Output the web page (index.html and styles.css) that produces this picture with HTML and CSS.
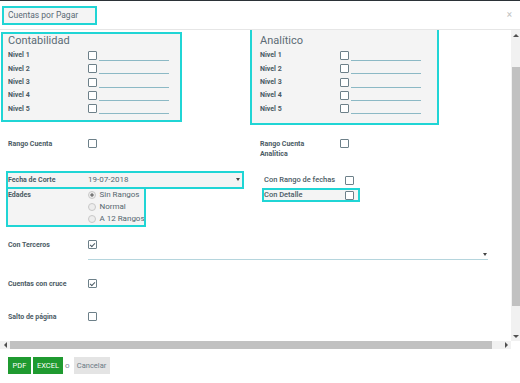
FILE: index.html
```html
<!DOCTYPE html>
<html lang="es">
<head>
  <meta charset="UTF-8" />
  <title>Cuentas por Pagar</title>
  <link rel="stylesheet" href="styles.css">
</head>
<body>
  <div class="modal">
    <div class="modal-header">
      <div class="modal-title hl">Cuentas por Pagar</div>
      <span class="cerrar">×</span>
    </div>

    <div class="modal-body">
      <div class="viewport">
        <div class="form">

          <div class="grid niveles">
            <div class="nivel-box hl box-izq">
              <h3>Contabilidad</h3>
              <div class="nivel-row"><span class="lbl">Nivel 1</span><span class="chk"></span><span class="linea"></span></div>
              <div class="nivel-row"><span class="lbl">Nivel 2</span><span class="chk"></span><span class="linea"></span></div>
              <div class="nivel-row"><span class="lbl">Nivel 3</span><span class="chk"></span><span class="linea"></span></div>
              <div class="nivel-row"><span class="lbl">Nivel 4</span><span class="chk"></span><span class="linea"></span></div>
              <div class="nivel-row"><span class="lbl">Nivel 5</span><span class="chk"></span><span class="linea"></span></div>
            </div>
            <div class="nivel-box hl box-der">
              <h3>Analítico</h3>
              <div class="nivel-row"><span class="lbl">Nivel 1</span><span class="chk"></span><span class="linea"></span></div>
              <div class="nivel-row"><span class="lbl">Nivel 2</span><span class="chk"></span><span class="linea"></span></div>
              <div class="nivel-row"><span class="lbl">Nivel 3</span><span class="chk"></span><span class="linea"></span></div>
              <div class="nivel-row"><span class="lbl">Nivel 4</span><span class="chk"></span><span class="linea"></span></div>
              <div class="nivel-row"><span class="lbl">Nivel 5</span><span class="chk"></span><span class="linea"></span></div>
            </div>
          </div>

          <div class="grid fila-rango">
            <div class="field"><span class="lbl">Rango Cuenta</span><span class="chk"></span></div>
            <div class="field"><span class="lbl lbl-corta">Rango Cuenta Analítica</span><span class="chk"></span></div>
          </div>

          <div class="grid fila-fecha">
            <div>
              <div class="field fecha hl">
                <span class="lbl">Fecha de Corte</span>
                <span class="valor">19-07-2018</span>
                <span class="caret"></span>
              </div>
              <div class="edades hl">
                <span class="lbl">Edades</span>
                <div class="radios">
                  <div class="radio on">Sin Rangos</div>
                  <div class="radio">Normal</div>
                  <div class="radio">A 12 Rangos</div>
                </div>
              </div>
            </div>
            <div class="col-der">
              <div class="field rango-fechas"><span class="lbl lbl-med">Con Rango de fechas</span><span class="chk"></span></div>
              <div class="field detalle hl"><span class="lbl lbl-med">Con Detalle</span><span class="chk"></span></div>
            </div>
          </div>

          <div class="field terceros"><span class="lbl">Con Terceros</span><span class="chk on"></span></div>
          <div class="select-terceros"><span class="caret"></span></div>

          <div class="field cruce"><span class="lbl">Cuentas con cruce</span><span class="chk on"></span></div>
          <div class="field salto"><span class="lbl">Salto de página</span><span class="chk"></span></div>

        </div>
      </div>

      <div class="vscroll">
        <span class="flecha arriba"></span>
        <div class="pista"><div class="thumb"></div></div>
        <span class="flecha abajo"></span>
      </div>
      <div class="hscroll">
        <span class="flecha izq"></span>
        <div class="pista"><div class="thumb"></div></div>
        <span class="flecha der"></span>
      </div>
      <div class="esquina"></div>
    </div>

    <div class="modal-footer">
      <button class="btn btn-verde">PDF</button>
      <button class="btn btn-verde btn-excel">EXCEL</button>
      <span class="o">o</span>
      <button class="btn btn-cancelar">Cancelar</button>
    </div>
  </div>
</body>
</html>
```

FILE: styles.css
```css
* {
  box-sizing: border-box;
}
body {
  margin: 0;
  font-family: Roboto, "Liberation Sans", sans-serif;
  color: #4e5e68;
  background: #fff;
}
.modal {
  width: 520px;
  height: 383px;
  border-top: 1px solid #2b3237;
  display: flex;
  flex-direction: column;
}
.hl {
  outline: 2px solid #20d5d5;
  background: #f4f4f4;
}

/* cabecera */
.modal-header {
  height: 29px;
  flex: none;
  border-bottom: 1px solid #e6e6e6;
  display: flex;
  align-items: center;
  justify-content: space-between;
  padding: 0 8px 0 4px;
}
.modal-title {
  width: 91px;
  height: 15px;
  line-height: 15px;
  padding-left: 4px;
  font-size: 8.5px;
  color: #5a6a74;
}
.cerrar {
  font-size: 10px;
  color: #c2c2c2;
  margin-top: -1px;
}

/* cuerpo con barras de desplazamiento */
.modal-body {
  height: 319px;
  flex: none;
  display: grid;
  grid-template-columns: 511px 9px;
  grid-template-rows: 311px 8px;
}
.viewport {
  overflow: hidden;
}
.vscroll,
.hscroll {
  background: #f1f1f1;
  display: flex;
  align-items: center;
}
.vscroll {
  flex-direction: column;
}
.pista {
  flex: 1;
  align-self: stretch;
  display: flex;
}
.vscroll .pista {
  flex-direction: column;
}
.thumb {
  background: #c1c1c1;
}
.vscroll .thumb {
  height: 239px;
  margin: 27px 0 0 1px;
}
.hscroll .thumb {
  width: 482px;
}
.vscroll .flecha {
  height: 10px;
  display: flex;
  align-items: center;
}
.hscroll .flecha {
  width: 10px;
  display: flex;
  justify-content: center;
}
.flecha::before {
  content: "";
  border: 0 solid transparent;
}
.arriba::before {
  border-width: 0 3px 3px;
  border-bottom-color: #505050;
}
.abajo::before {
  border-width: 3px 3px 0;
  border-top-color: #505050;
}
.izq::before {
  border-width: 3px 3px 3px 0;
  border-right-color: #505050;
}
.der::before {
  border-width: 3px 0 3px 3px;
  border-left-color: #505050;
}
.esquina {
  background: #fff;
}

.form {
  width: 521px;
  padding-left: 8px;
}
.grid {
  display: grid;
  grid-template-columns: 252px 252px;
  align-items: start;
}

.lbl {
  width: 80px;
  flex: none;
  font-size: 7px;
  font-weight: 700;
  line-height: 10px;
  color: #4b5b65;
}
.lbl-corta {
  padding-right: 18px;
}
.lbl-med {
  font-weight: 500;
  font-size: 7.5px;
}
.chk {
  width: 9px;
  height: 9px;
  flex: none;
  border: 1px solid #6d8089;
  border-radius: 1px;
  background: #fff;
  display: flex;
  align-items: center;
  justify-content: center;
}
.chk.on::after {
  content: "";
  width: 4px;
  height: 2px;
  margin-top: -1px;
  border-left: 1px solid #4e5e68;
  border-bottom: 1px solid #4e5e68;
  transform: rotate(-45deg);
}
.caret {
  width: 0;
  height: 0;
  border-left: 2.5px solid transparent;
  border-right: 2.5px solid transparent;
  border-top: 3px solid #444;
}

/* niveles */
.nivel-box h3 {
  margin: 0;
  height: 14.6px;
  line-height: 14.6px;
  font-size: 11px;
  font-weight: 400;
  color: #5b6b75;
}
.box-izq {
  width: 177px;
  margin: 4px 0 0 -5px;
  padding: 0 0 4.4px 5px;
}
.box-der {
  width: 185px;
  margin-left: -8px;
  padding: 4px 0 7.4px 8px;
}
.nivel-row {
  display: flex;
  align-items: center;
  height: 13.4px;
}
.linea {
  width: 70px;
  height: 9px;
  margin: 2px 0 0 2px;
  border-bottom: 1px solid #8cb9c5;
}

/* campos */
.field {
  display: flex;
  align-items: flex-start;
}
.field .chk {
  margin-top: 0.5px;
}
.fila-rango {
  margin-top: 16px;
}
.fila-fecha {
  margin-top: 14px;
}
.fecha {
  width: 234px;
  height: 14px;
  align-items: center;
}
.fecha .lbl {
  line-height: 14px;
}
.valor {
  font-size: 8px;
  color: #55656f;
}
.fecha .caret {
  margin-left: auto;
  margin-right: 2px;
}
.edades {
  width: 136px;
  margin-top: 2px;
  display: flex;
}
.edades .lbl {
  line-height: 12px;
}
.radios {
  white-space: nowrap;
}
.radio {
  height: 12px;
  display: flex;
  align-items: center;
  font-size: 8px;
  color: #55666f;
}
.radio::before {
  content: "";
  width: 6px;
  height: 6px;
  margin-right: 3.5px;
  border-radius: 50%;
  border: 1px solid #c8c8c8;
  background: #ededed;
}
.radio.on::before {
  background: radial-gradient(circle, #777 1.3px, #ededed 2px);
}
.col-der {
  padding-left: 4px;
}
.col-der .lbl {
  width: 81px;
}
.rango-fechas {
  height: 14px;
  align-items: center;
}
.detalle {
  width: 94px;
  height: 10px;
  margin-top: 3px;
  align-items: center;
}
.terceros {
  margin-top: 15px;
}
.select-terceros {
  width: 400px;
  height: 10px;
  margin-left: 80px;
  border-bottom: 1px solid #b5d5dd;
  display: flex;
  justify-content: flex-end;
  align-items: center;
}
.select-terceros .caret {
  margin-right: 1px;
}
.cruce {
  margin-top: 19px;
}
.salto {
  margin-top: 23px;
}

/* pie */
.modal-footer {
  flex: 1;
  padding: 8px 0 0 8px;
  display: flex;
  align-items: flex-start;
}
.btn {
  height: 17px;
  border: none;
  padding: 0;
  font-family: Roboto, "Liberation Sans", sans-serif;
  font-size: 7.5px;
  cursor: pointer;
}
.btn-verde {
  width: 23px;
  background: #1f9a30;
  color: #fff;
}
.btn-excel {
  width: 30px;
  margin-left: 2px;
}
.o {
  margin: 0 4px 0 2px;
  font-size: 8px;
  line-height: 17px;
  color: #7a8a94;
}
.btn-cancelar {
  width: 36px;
  background: #e4e4e4;
  color: #6a7a84;
}
```
